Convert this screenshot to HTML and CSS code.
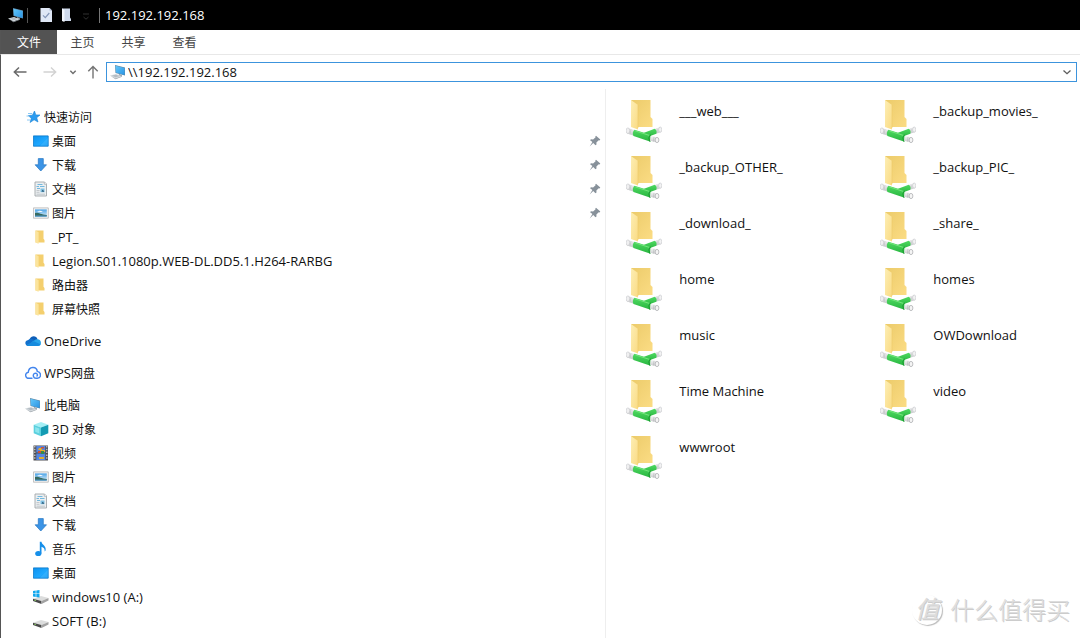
FILE: index.html
```html
<!DOCTYPE html>
<html lang="zh-CN">
<head>
<meta charset="utf-8">
<title>192.192.192.168</title>
<link rel="stylesheet" href="styles.css">
</head>
<body>
<svg class="sprite" aria-hidden="true">
  <defs>
    <linearGradient id="g-screen" x1="0" y1="0" x2="1" y2="1"><stop offset="0" stop-color="#63c8fb"/><stop offset="1" stop-color="#2b93e2"/></linearGradient>
    <linearGradient id="g-front" x1="0" y1="0" x2="1" y2="1"><stop offset="0" stop-color="#fdeeb4"/><stop offset="1" stop-color="#fadb84"/></linearGradient>
    <linearGradient id="g-back" x1="0" y1="0" x2="1" y2="1"><stop offset="0" stop-color="#eccb6a"/><stop offset="1" stop-color="#fbdc84"/></linearGradient>
    <linearGradient id="g-green" x1="0" y1="0" x2="0" y2="1"><stop offset="0" stop-color="#50da62"/><stop offset="1" stop-color="#27b53f"/></linearGradient>
    <linearGradient id="g-tube" x1="0" y1="0" x2="0" y2="1"><stop offset="0" stop-color="#f3f3f4"/><stop offset="1" stop-color="#c6c8ca"/></linearGradient>
    <linearGradient id="g-desk" x1="0" y1="0" x2="1" y2="1"><stop offset="0" stop-color="#0c91ee"/><stop offset=".6" stop-color="#1fa8ff"/><stop offset="1" stop-color="#0b8ce8"/></linearGradient>
    <linearGradient id="g-sky" x1="0" y1="0" x2="0" y2="1"><stop offset="0" stop-color="#4ba3e6"/><stop offset="1" stop-color="#e0f1fa"/></linearGradient>
  </defs>
  <symbol id="pc" viewBox="0 0 16 16">
    <path d="M5 1 15 3.500V11.500L5.500 9z" fill="#5f88a6"/><path d="M5.500 1.700 14.600 4V10.900L5.900 8.500z" fill="url(#g-screen)"/>
    <path d="m9 10 3 1-.5 1.500-3-.7z" fill="#8d99a3"/>
    <path d="m0 11.500 6-1.500 6 2.200-6.500 2.300z" fill="#d3d9dd"/><path d="m2 11.600 4-.9 3.600 1.400-4.100 1.200z" fill="#b3bbc2"/><path d="m0 11.500 5.500 3 6.500-2.300v.6L5.500 15.200z" fill="#949da4"/>
  </symbol>
  <symbol id="star" viewBox="0 0 16 16">
    <path d="m9.500 2 1.300 3.900 4.200.1-3.300 2.700 1.300 4.300-3.900-2.200-4 2.700 1.200-4.200-3-2.700 4.100-.4z" fill="#2b9cf0" stroke="#1782d4" stroke-width=".6"/>
    <path d="M3 4.500h4M1.500 7h3M2 11h3" stroke="#8dc9f4" stroke-width="1"/>
  </symbol>
  <symbol id="desktop" viewBox="0 0 16 16"><path d="M.4 2.900h14.800v10.300H.4z" fill="url(#g-desk)" stroke="#0876c9" stroke-width=".8"/><path d="M7 12.800 14.800 5v7.800z" fill="#48bbff" opacity=".5"/></symbol>
  <symbol id="down" viewBox="0 0 16 16"><path d="M5.300 1.600h5v6.200h3.200L7.800 14 2.100 7.800h3.200z" fill="#3c94e6" stroke="#2476c2" stroke-width=".7"/></symbol>
  <symbol id="doc" viewBox="0 0 16 16">
    <path d="M2 1h9.500L13.500 3V15H2z" fill="#eceff1" stroke="#a2a7aa" stroke-width=".9"/><path d="M11.300 1v2.300h2.200" fill="#fff" stroke="#a2a7aa" stroke-width=".7"/>
    <path d="M4.500 3.500h5M3.500 5.500h2.500M7 5.500h4.500M4 7.500h3" stroke="#72b8de" stroke-width="1.200"/><path d="M7.500 7.500h4v3.700h-4z" fill="#7fc1e3"/><path d="m8.500 10.500 1.300-1.700 1.500 2z" fill="#234c69"/><path d="M3.500 9.500h3M3.500 11.300h3M3.500 13.200h8.500" stroke="#b7bdc1" stroke-width=".8"/>
  </symbol>
  <symbol id="pic" viewBox="0 0 16 16">
    <path d="M.4 2.900h14.900v10.300H.4z" fill="#f6f6f6" stroke="#b4b4b4" stroke-width=".8"/><path d="M2 4.400h11.800v7.400H2z" fill="url(#g-sky)"/><path d="M2 8c3-1 5 1.300 11.800 2v1H2z" fill="#386b60"/><path d="M2 10.500h11.800v1.300H2z" fill="#4a91bd"/><path d="M4 6.500c2-1.500 4-.7 6-.3L8 7z" fill="#fff"/>
  </symbol>
  <symbol id="folder" viewBox="0 0 16 16"><path d="M2.500 1.500h8v8.300l1 1.300v2.500h-9z" fill="#f4cf6e"/><path d="m2.500 1.500 3.100 1.700v11.600l-3.100-1.200z" fill="#fbe49d"/></symbol>
  <symbol id="onedrive" viewBox="0 0 16 16">
    <path d="M4.500 6.200C6.300 2 11.500 2.300 12.600 6.500L8 10z" fill="#0d5eb8"/><path d="M3.500 13C-.5 13-.8 7.500 3.200 7c2-1.900 4.200-1.500 6 .2L13 10l-6 3z" fill="#1270cc"/><path d="m7.500 8.500 3.200-2c3-1.200 5.300.8 5.300 3.500 0 1.800-1.200 3-3 3H3.500z" fill="#2aa5ea"/><path d="M1.300 12 8.800 8.300l6.700 3c-.5 1-1.400 1.700-2.700 1.700H3.500q-1.300 0-2.200-1z" fill="#168bde"/>
  </symbol>
  <symbol id="wps" viewBox="0 0 16 16"><path d="M7 13.300H4C-.2 13.300-.5 7.800 3.300 7.200 3.600 1.200 11.600.8 12.300 6.400c4.300.6 4.200 6.900 0 6.900H11c-2.800 0-3.700-3.800-1.300-4.900 2-.8 3.400 1.300 2.300 2.600" fill="none" stroke="#4285ed" stroke-width="1.400" stroke-linecap="round"/></symbol>
  <symbol id="cube" viewBox="0 0 16 16"><path d="m.7 3.800 7.300-2.900 7.300 2.900L8 6.500z" fill="#a4eff5"/><path d="M.7 3.800 8 6.500v8.700L.7 12.200z" fill="#5bd0de"/><path d="M15.300 3.800 8 6.500v8.700l7.300-3z" fill="#139bb3"/><path d="m2.200 5.900 4.100 1.500v5.100l-4.100-1.700z" fill="#8be5ed"/></symbol>
  <symbol id="video" viewBox="0 0 16 16"><path d="M.5.500H15v15H.5z" fill="#4d4d51"/><path d="M3.300 1h9v6.500h-9zM3.300 8.500h9V15h-9z" fill="#5586e0"/><path d="M6 3h3v2h3v2H7V5H5zM6 12h5v2H6z" fill="#e2ad2c"/><path d="M8 6h3v3H8z" fill="#338c4b"/><path d="M5 6h3v2H5zM8 2h3v1.500H8z" fill="#ce5038"/><path d="M1.800 1v14M13.800 1v14" stroke="#d2d2d2" stroke-width="1.200" stroke-dasharray="1.500 1.300"/></symbol>
  <symbol id="music" viewBox="0 0 16 16"><ellipse cx="5.300" cy="12.500" rx="3.100" ry="2.600" fill="#168fe9"/><path d="M6.800 12.500V.8h1.700c.2 3 4.700 3.600 4.200 8.500l-1 1.300c.2-3-1-4-3.200-4.800v6.700z" fill="#168fe9"/></symbol>
  <symbol id="drive" viewBox="0 0 16 16"><path d="m0 9.700 8-2.800 7.500 2.200L8.500 12z" fill="#dcdddd"/><path d="m0 9.700 8.500 2.300v3L0 12.100z" fill="#4a4a4a"/><path d="m8.500 12 7-2.900v2.500l-7 3.400z" fill="#a2a2a2"/><path d="m1.200 11.100 1.800.6" stroke="#8edb61" stroke-width=".8"/></symbol>
  <symbol id="windrive" viewBox="0 0 16 16"><use href="#drive"/><path d="m0 2 2.700-.4v2.900H0zM3.300 1.500 6.500 1v3.500H3.300zM0 5.100h2.700V8L0 7.600zM3.300 5.100h3.200v3.500l-3.200-.5z" fill="#12a7ed"/></symbol>
  <symbol id="pin" viewBox="0 0 12 12"><path d="m7 .8 4.300 3.800-.8.900-.8-.2-2.300 2.300.1 1.900-1 .8-2.300-2.400L.7 11.400 3.400 7 1.100 5.300l.8-1 2.200.1 2.500-2.200-.3-.7z" fill="#87919a"/></symbol>
  <symbol id="share" viewBox="0 0 36 44">
    <path d="M5 1h19.500v17l2 2v8H10z" fill="url(#g-back)"/><path d="m5 1 7 5v24.500L5 28z" fill="url(#g-front)"/><path d="M12 6v23" stroke="#edc968" stroke-width=".6"/>
    <path d="m2 29 7.500 2.200-1.500 5.500-7-2.200z" fill="url(#g-tube)"/><ellipse cx="1.900" cy="31.700" rx="1.800" ry="2.800" fill="#f0f0f1" stroke="#c3c5c7" stroke-width=".6"/><path d="m5 30-1 5.300" stroke="#bfc2c4" stroke-width=".6"/>
    <path d="m28 30.300 6-2.200 1.500 5-6.500 2z" fill="url(#g-tube)"/><ellipse cx="34.200" cy="30.600" rx="1.600" ry="2.600" fill="#f2f2f3" stroke="#c3c5c7" stroke-width=".6"/><path d="m31 29.300 1 4.800" stroke="#c8cacc" stroke-width=".6"/>
    <path d="M16 34.500 28.700 29.700q2.800 1.500 1.600 5L20 38.500z" fill="url(#g-green)"/><path d="m8.500 30.700 16 5v7L7.500 37q-1.800-3.500 1-6.300z" fill="url(#g-green)"/><path d="m9.300 31.900 14 4.500" stroke="#72e57b" stroke-width="1"/>
    <path d="m25 37.100 6.500 1.300v5.200l-7.500-1.800z" fill="url(#g-tube)"/><path d="M24.500 35.700q-3 2.900-.7 6.900" fill="none" stroke="#1c9a32"/><ellipse cx="31" cy="41" rx="1.900" ry="2.600" fill="#f5f5f5" stroke="#aeb0b2" stroke-width=".8"/><path d="m28 37.800-.7 4.900" stroke="#b5b8ba" stroke-width=".6"/>
  </symbol>
</svg>

<div class="window">
  <header class="titlebar">
    <svg class="icon"><use href="#pc"/></svg>
    <span class="separator"></span>
    <button class="quick quick-first" aria-label="属性"><svg class="icon" viewBox="0 0 16 16"><path d="M2.500 1h9l2.500 2.500V15H2.500z" fill="#dfe7f5"/><path d="M11.500 1v2.500H14z" fill="#a9b6ce"/><path d="m5 8.300 2.300 2.300 4-4.600" fill="none" stroke="#8496b8" stroke-width="1.200"/></svg></button>
    <button class="quick" aria-label="新建文件夹"><svg class="icon" viewBox="0 0 16 16"><path d="M4 1.500h8v9l1 1.500v2H4z" fill="#cfdaec"/><path d="m4 1.500 2.500 1.500v12L4 14z" fill="#f2f6fc"/></svg></button>
    <button class="quick" aria-label="自定义快速访问工具栏"><svg class="icon" viewBox="0 0 16 16"><path d="M5 7h6M5.500 10 8 12.200l2.500-2.200" fill="none" stroke="#303030"/></svg></button>
    <span class="separator"></span>
    <h1 class="title">192.192.192.168</h1>
  </header>
  <nav class="tabs">
    <button class="tab tab-file">文件</button><button class="tab">主页</button><button class="tab">共享</button><button class="tab">查看</button>
  </nav>
  <div class="toolbar">
    <button class="nav-btn" aria-label="后退"><svg class="icon" viewBox="0 0 16 16"><path d="M14.500 8h-12M7 3.500 2.300 8 7 12.500" fill="none" stroke="#6a6a6a" stroke-width="1.500"/></svg></button>
    <button class="nav-btn nav-forward" aria-label="前进"><svg class="icon" viewBox="0 0 16 16"><path d="M1.500 8h12M9 3.500 13.700 8 9 12.500" fill="none" stroke="#d2d2d2" stroke-width="1.400"/></svg></button>
    <button class="nav-btn nav-recent" aria-label="最近浏览的位置"><svg class="icon-small" viewBox="0 0 12 12"><path d="m3.300 4.800 2.700 2.700 2.700-2.700" fill="none" stroke="#707070" stroke-width="1.500"/></svg></button>
    <button class="nav-btn" aria-label="上移"><svg class="icon" viewBox="0 0 16 16"><path d="M8 14.500v-12M3.300 7.300 8 2.400l4.700 4.900" fill="none" stroke="#747474" stroke-width="1.400"/></svg></button>
    <div class="address">
      <svg class="icon"><use href="#pc"/></svg>
      <input class="address-input" type="text" aria-label="地址" value="\\192.192.192.168">
      <button class="nav-btn" aria-label="以前的位置"><svg class="icon-small" viewBox="0 0 12 12"><path d="m2.500 4.500 3.500 3.200 3.500-3.200" fill="none" stroke="#5b5b5b" stroke-width="1.300"/></svg></button>
    </div>
  </div>
  <div class="content">
    <aside class="sidebar">
      <section class="group">
        <a class="entry root" href="#quick"><svg class="icon"><use href="#star"/></svg>快速访问</a>
        <a class="entry" href="#desktop-q"><svg class="icon"><use href="#desktop"/></svg>桌面<svg class="pin"><use href="#pin"/></svg></a>
        <a class="entry" href="#down-q"><svg class="icon"><use href="#down"/></svg>下载<svg class="pin"><use href="#pin"/></svg></a>
        <a class="entry" href="#doc-q"><svg class="icon"><use href="#doc"/></svg>文档<svg class="pin"><use href="#pin"/></svg></a>
        <a class="entry" href="#pic-q"><svg class="icon"><use href="#pic"/></svg>图片<svg class="pin"><use href="#pin"/></svg></a>
        <a class="entry" href="#pt"><svg class="icon"><use href="#folder"/></svg><span class="latin">_PT_</span></a>
        <a class="entry" href="#legion"><svg class="icon"><use href="#folder"/></svg><span class="latin">Legion.S01.1080p.WEB-DL.DD5.1.H264-RARBG</span></a>
        <a class="entry" href="#router"><svg class="icon"><use href="#folder"/></svg>路由器</a>
        <a class="entry" href="#snap"><svg class="icon"><use href="#folder"/></svg>屏幕快照</a>
      </section>
      <section class="group"><a class="entry root" href="#od"><svg class="icon"><use href="#onedrive"/></svg><span class="latin">OneDrive</span></a></section>
      <section class="group"><a class="entry root" href="#wpsdrive"><svg class="icon"><use href="#wps"/></svg><span><span class="latin">WPS</span>网盘</span></a></section>
      <section class="group">
        <a class="entry root" href="#this-pc"><svg class="icon"><use href="#pc"/></svg>此电脑</a>
        <a class="entry" href="#objects"><svg class="icon"><use href="#cube"/></svg><span><span class="latin">3D</span> 对象</span></a>
        <a class="entry" href="#videos"><svg class="icon"><use href="#video"/></svg>视频</a>
        <a class="entry" href="#pictures"><svg class="icon"><use href="#pic"/></svg>图片</a>
        <a class="entry" href="#documents"><svg class="icon"><use href="#doc"/></svg>文档</a>
        <a class="entry" href="#downloads"><svg class="icon"><use href="#down"/></svg>下载</a>
        <a class="entry" href="#songs"><svg class="icon"><use href="#music"/></svg>音乐</a>
        <a class="entry" href="#desk"><svg class="icon"><use href="#desktop"/></svg>桌面</a>
        <a class="entry" href="#drive-a"><svg class="icon"><use href="#windrive"/></svg><span class="latin">windows10 (A:)</span></a>
        <a class="entry" href="#drive-b"><svg class="icon"><use href="#drive"/></svg><span class="latin">SOFT (B:)</span></a>
      </section>
    </aside>
    <main class="files">
      <a class="file" href="#f1"><svg class="share"><use href="#share"/></svg><span class="name">___web___</span></a>
      <a class="file" href="#f2"><svg class="share"><use href="#share"/></svg><span class="name">_backup_movies_</span></a>
      <a class="file" href="#f3"><svg class="share"><use href="#share"/></svg><span class="name">_backup_OTHER_</span></a>
      <a class="file" href="#f4"><svg class="share"><use href="#share"/></svg><span class="name">_backup_PIC_</span></a>
      <a class="file" href="#f5"><svg class="share"><use href="#share"/></svg><span class="name">_download_</span></a>
      <a class="file" href="#f6"><svg class="share"><use href="#share"/></svg><span class="name">_share_</span></a>
      <a class="file" href="#f7"><svg class="share"><use href="#share"/></svg><span class="name">home</span></a>
      <a class="file" href="#f8"><svg class="share"><use href="#share"/></svg><span class="name">homes</span></a>
      <a class="file" href="#f9"><svg class="share"><use href="#share"/></svg><span class="name">music</span></a>
      <a class="file" href="#f10"><svg class="share"><use href="#share"/></svg><span class="name">OWDownload</span></a>
      <a class="file" href="#f11"><svg class="share"><use href="#share"/></svg><span class="name">Time Machine</span></a>
      <a class="file" href="#f12"><svg class="share"><use href="#share"/></svg><span class="name">video</span></a>
      <a class="file" href="#f13"><svg class="share"><use href="#share"/></svg><span class="name">wwwroot</span></a>
    </main>
  </div>
  <div class="watermark"><span class="seal">值</span><span>什么值得买</span></div>
</div>
</body>
</html>
```

FILE: styles.css
```css
* { box-sizing: border-box; }

body {
  margin: 0;
  background: #fff;
  color: #111;
  font-family: "Open Sans", "Noto Sans CJK SC", sans-serif;
  font-size: 12px;
}

button, input {
  margin: 0;
  padding: 0;
  border: 0;
  background: none;
  color: inherit;
  font: inherit;
}

a { color: inherit; text-decoration: none; }

svg { display: block; flex: none; }

.sprite { position: absolute; width: 0; height: 0; }
.icon { width: 16px; height: 16px; }
.icon-small { width: 12px; height: 12px; }

.window {
  position: relative;
  display: flex;
  flex-direction: column;
  min-height: 100vh;
}

.titlebar {
  display: flex;
  align-items: center;
  height: 30px;
  padding-left: 8px;
  background: #000;
  color: #fff;
}

.separator { width: 1px; height: 15px; margin-left: 3px; background: #555; }
.quick { margin-left: 4px; }
.quick-first { margin-left: 10px; }
.quick + .separator { margin-left: 5px; background: #777; }
.title { margin: 0 0 0 5px; font-size: 13px; font-weight: 400; }

.tabs {
  display: flex;
  height: 25px;
  border-bottom: 1px solid #e8e8e8;
  border-left: 1px solid #555;
}

.tab { width: 51px; color: #444; }
.tab-file { width: 56px; background: #535353; color: #fff; }

.toolbar {
  display: flex;
  align-items: center;
  height: 34px;
  padding: 0 3px 0 11px;
  border-left: 1px solid #555;
}

.nav-btn { flex: none; }
.nav-forward { margin-left: 14px; }
.nav-recent { margin: 0 6px 0 9px; }

.address {
  display: flex;
  flex: 1;
  align-items: center;
  height: 20px;
  margin-left: 5px;
  padding: 0 3px;
  border: 1px solid #3c94dd;
}

.address-input {
  flex: 1;
  min-width: 0;
  margin-left: 2px;
  outline: none;
  font-size: 13px;
}

.content { display: flex; flex: 1; border-left: 1px solid #555; }

.sidebar {
  flex: 0 0 56.1%;
  padding: 16px 4px 0 0;
  border-right: 1px solid #eee;
}

.group + .group { margin-top: 8px; }

.entry {
  display: flex;
  align-items: center;
  gap: 3px;
  height: 24px;
  padding-left: 32px;
}

.root { padding-left: 24px; }
.latin, .name { font-size: 13px; }
.pin { width: 12px; height: 12px; margin-left: auto; }

.files {
  display: grid;
  flex: 1;
  grid-template-columns: 254px 1fr;
  grid-auto-rows: 56px;
  align-content: start;
  padding: 10px 0 0 20px;
}

.file { display: flex; gap: 17px; }
.share { width: 36px; height: 44px; }
.name { line-height: 24px; }

.watermark {
  position: absolute;
  right: 10px;
  bottom: 12px;
  display: flex;
  align-items: center;
  gap: 8px;
  color: #ddd;
  font-size: 24px;
  font-weight: 300;
  line-height: 32px;
  text-shadow: 1px 1px 0 #ccc;
}

.seal {
  width: 30px;
  height: 30px;
  border-radius: 50%;
  box-shadow: 1px 1px 1px #bbb;
  font-style: italic;
  font-weight: 400;
  line-height: 28px;
  text-align: center;
}
```
